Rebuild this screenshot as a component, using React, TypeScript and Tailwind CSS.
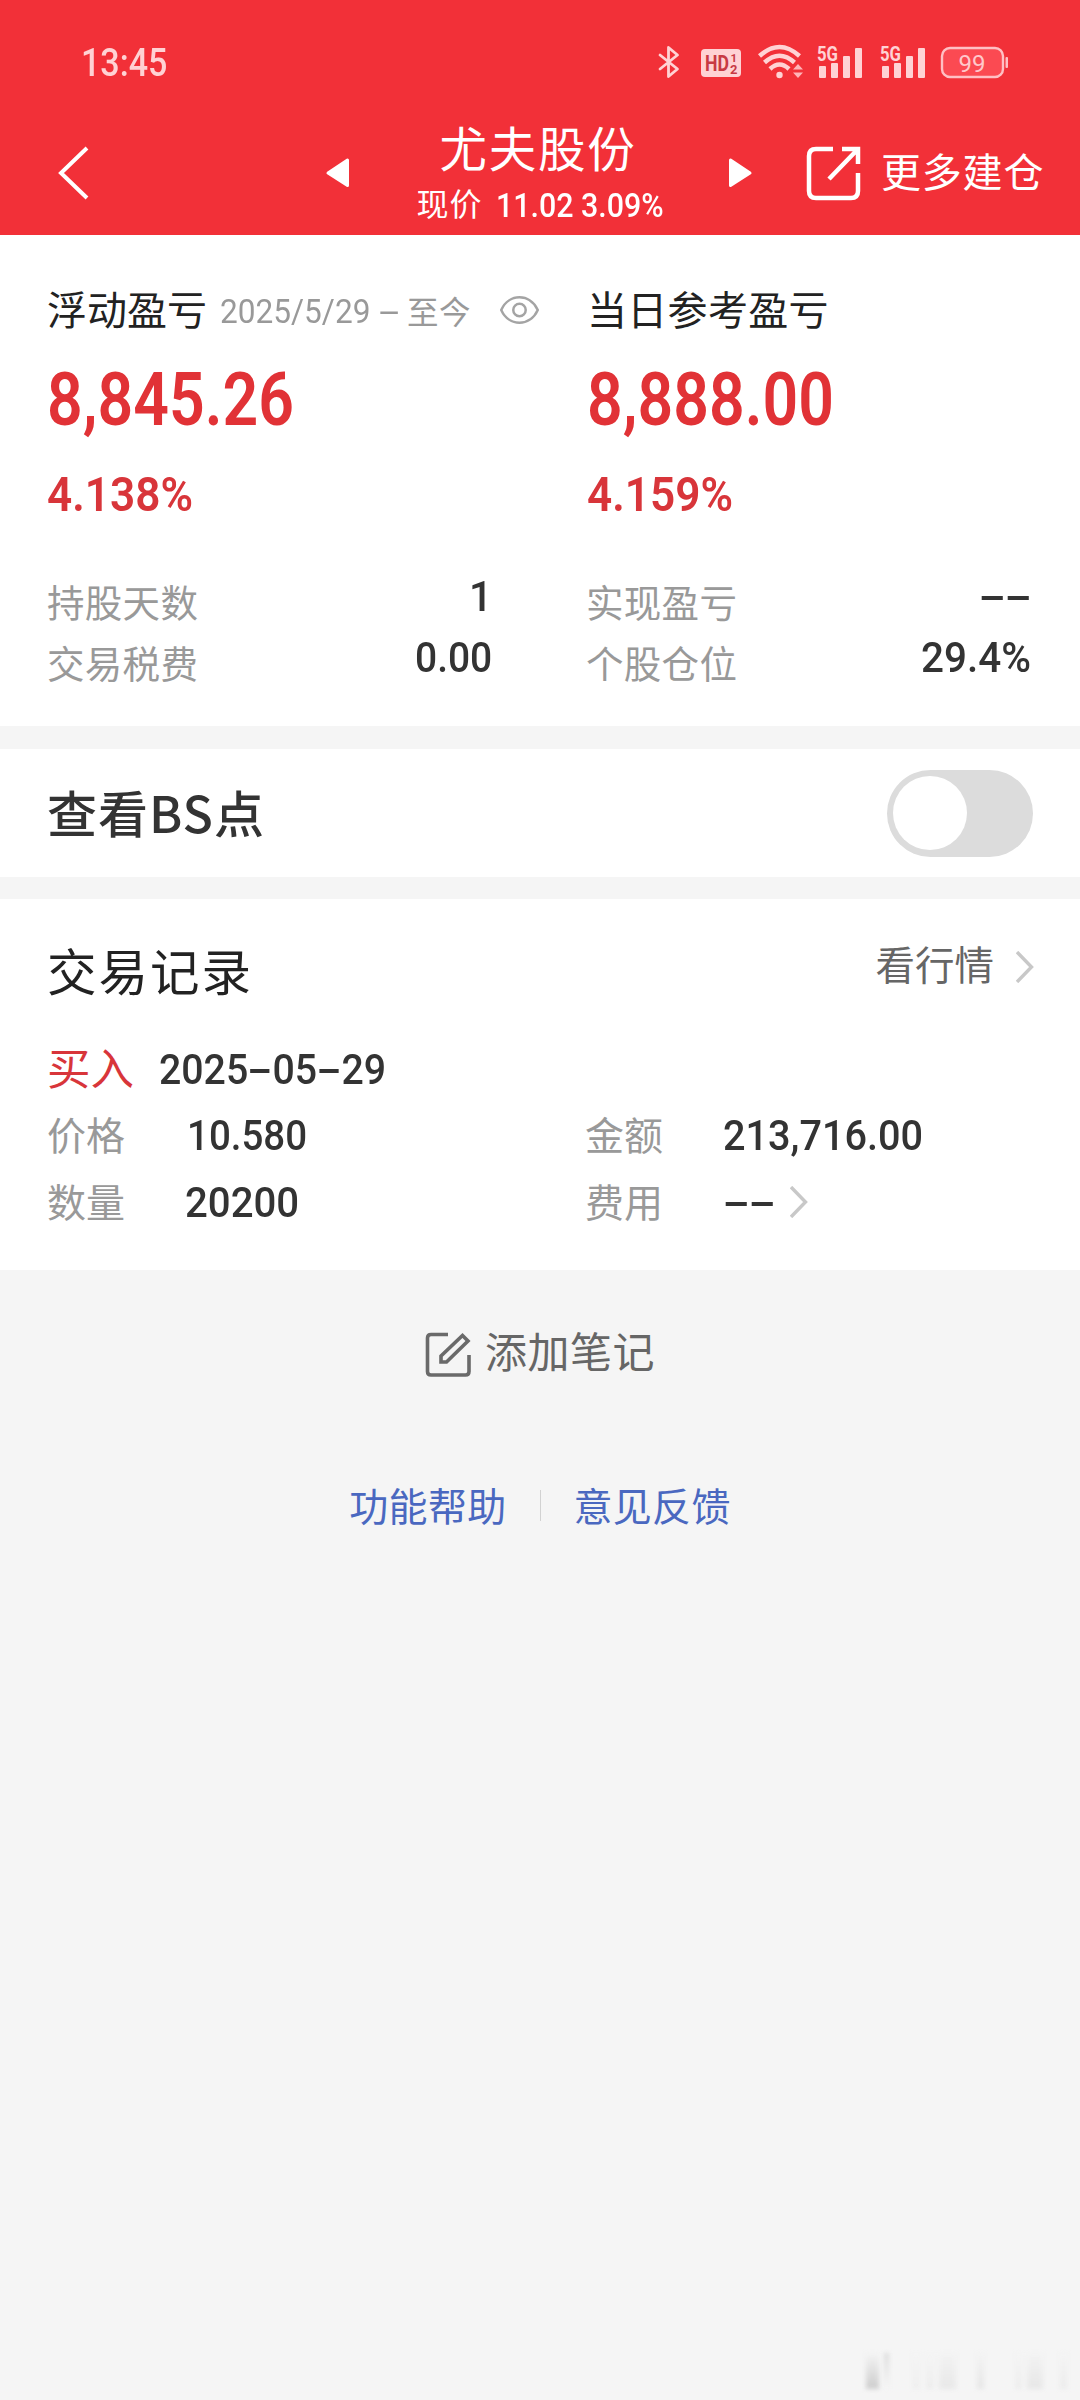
import { useLayoutEffect, useRef, useState } from "react";
import type { ReactNode } from "react";

// Squeezes a run of digits horizontally so that it fills the given width.
function Num({ w, className = "", children }: { w: number; className?: string; children: ReactNode }) {
  const ref = useRef<HTMLSpanElement>(null);
  const [k, setK] = useState(1);
  useLayoutEffect(() => {
    if (ref.current) setK(w / ref.current.offsetWidth);
  }, [w]);
  return (
    <span className={`block shrink-0 font-[Roboto,sans-serif] leading-none ${className}`} style={{ width: w }}>
      <span ref={ref} className="inline-block origin-left whitespace-nowrap" style={{ transform: `scaleX(${k})` }}>
        {children}
      </span>
    </span>
  );
}

// A wide hyphen, as long as a digit.
function Dash() {
  return (
    <span className="inline-block w-[26px] text-center">
      <span className="inline-block scale-x-[1.9]">-</span>
    </span>
  );
}

function Chevron({ className = "" }: { className?: string }) {
  return (
    <svg className={className} width="18" height="32" viewBox="0 0 18 32" fill="none" stroke="#c8c8c8" strokeWidth="3.400">
      <path d="M1 1 L15.500 16 L1 31" />
    </svg>
  );
}

function Signal() {
  return (
    <svg width="48" height="44" viewBox="0 -4 48 44" fill="#ffd2d4">
      <text x="1" y="17" fontSize="20" fontWeight="700" fontFamily="Roboto, sans-serif" textLength="21" lengthAdjust="spacingAndGlyphs">
        5G
      </text>
      <rect x="3" y="22" width="7" height="12" rx="1" />
      <rect x="15" y="19" width="7" height="15" rx="1" />
      <rect x="27" y="12" width="7" height="22" rx="1" />
      <rect x="39" y="4" width="7" height="30" rx="1" />
    </svg>
  );
}

function StatusBar() {
  return (
    <div className="flex h-[124px] items-center pl-[81px] text-[#ffd2d4]">
      <Num w={86} className="mt-px text-[38px] font-medium">13:45</Num>
      <div className="ml-[490px] flex h-[44px] items-center">
        <svg width="24" height="36" viewBox="0 0 24 36" fill="none" stroke="#ffd2d4" strokeWidth="2.8" strokeLinejoin="round" strokeLinecap="round">
          <path d="M3 11 L20.500 25 L11.500 32.500 V3.500 L20.500 11 L3 25" />
        </svg>
        <svg className="ml-[19px]" width="42" height="36" viewBox="0 0 42 36">
          <rect x="1" y="5" width="40" height="28" rx="4" fill="#ffd2d4" />
          <g fill="#c83a44" fontFamily="Roboto, sans-serif" fontWeight="700">
            <text x="5" y="27" fontSize="22" textLength="24" lengthAdjust="spacingAndGlyphs">HD</text>
            <text x="30.500" y="17.500" fontSize="11.500">1</text>
            <text x="30" y="29.500" fontSize="13">2</text>
          </g>
        </svg>
        <svg className="ml-[16px]" width="46" height="36" viewBox="0 0 46 36" fill="none" stroke="#ffd2d4" strokeWidth="4.500">
          <path d="M1.500 12 Q21.500 -6 41.500 12" />
          <path d="M6.500 18.500 Q21.500 5 36.500 18.500" />
          <path d="M12 25 Q21.500 16 31 25" />
          <circle cx="21.500" cy="31" r="3.200" fill="#ffd2d4" stroke="none" />
          <path d="M35 25.500 L40 20 L45 25.500 Z M35 28.500 L40 34 L45 28.500 Z" fill="#ffb4b8" stroke="none" />
        </svg>
        <div className="ml-[12px] flex gap-[15px]">
          <Signal />
          <Signal />
        </div>
        <svg className="ml-[13px]" width="68" height="36" viewBox="0 0 68 36">
          <rect x="2" y="4" width="61" height="29" rx="8" fill="#fb4a52" stroke="#ffc0c4" strokeWidth="2.400" />
          <rect x="65.500" y="13" width="2.500" height="11" rx="1" fill="#ffc0c4" />
          <text x="18.500" y="27.500" fontSize="24" fontFamily="Roboto, sans-serif" fill="#ffc8cb" textLength="27" lengthAdjust="spacingAndGlyphs">99</text>
        </svg>
      </div>
    </div>
  );
}

function TitleBar() {
  return (
    <div className="flex h-[111px] text-white">
      <svg className="ml-[56px] mt-[22px]" width="34" height="54" viewBox="0 0 34 54" fill="none" stroke="white" strokeWidth="4">
        <path d="M31 2 L5 27 L31 52" />
      </svg>
      <svg className="ml-[235px] mt-[33px]" width="26" height="32" viewBox="0 0 26 32" fill="white" stroke="white" strokeWidth="3" strokeLinejoin="round">
        <path d="M3 16 L22.500 3 V28.500 Z" />
      </svg>
      <div className="ml-[65px] flex w-[248px] flex-col items-center">
        <div className="-ml-[4px] -mt-px whitespace-nowrap text-[47.500px] leading-[48px] tracking-[1.8px]">尤夫股份</div>
        <div className="mt-[13px] flex h-[36px] items-center">
          <span className="text-[32px] leading-[36px] tracking-[1px]">现价</span>
          <Num w={168} className="ml-[13px] mt-[5px] text-[34px] font-medium">11.02 3.09%</Num>
        </div>
      </div>
      <svg className="ml-[63px] mt-[33px]" width="26" height="32" viewBox="0 0 26 32" fill="white" stroke="white" strokeWidth="3" strokeLinejoin="round">
        <path d="M23 16 L3.500 3 V28.500 Z" />
      </svg>
      <svg className="ml-[53px] mt-[21px]" width="56" height="56" viewBox="0 0 56 56" fill="none" stroke="white" strokeWidth="4.500">
        <path d="M27 4 H10 Q3 4 3 11 V46 Q3 53 10 53 H45 Q52 53 52 46 V28" />
        <path d="M36 4 H52 V19 M52 4 L23 34" />
      </svg>
      <span className="ml-[19px] mt-[25px] whitespace-nowrap text-[40px] leading-[42px] tracking-[0.800px]">更多建仓</span>
    </div>
  );
}

function Label({ children }: { children: ReactNode }) {
  return <span className="-ml-px -mt-[2px] whitespace-nowrap text-[37.500px] leading-[40px] tracking-[0.300px] text-[#999]">{children}</span>;
}

function Summary() {
  return (
    <section className="grid h-[491px] grid-cols-[540px_540px] bg-white">
      <div className="pl-[48px] pt-[52px]">
        <div className="flex h-[42px] items-center">
          <span className="-ml-px whitespace-nowrap text-[40px] leading-[42px] text-[#222]">浮动盈亏</span>
          <div className="ml-[13px] flex items-center pt-[3px] text-[#999]">
            <Num w={150} className="mt-[4px] text-[33.500px]">2025/5/29</Num>
            <Num w={20} className="ml-[9px] mt-[4px] text-[33px]">-</Num>
            <span className="ml-[8px] whitespace-nowrap text-[31.500px] leading-[36px] tracking-[0.500px]">至今</span>
          </div>
          <svg className="ml-[28px] mt-[3px]" width="46" height="34" viewBox="0 0 46 34" fill="none" stroke="#a4a4a4" strokeWidth="2.800">
            <path d="M2.500 17 C11 -2 35 -2 43.500 17 C35 36 11 36 2.500 17 Z" />
            <circle cx="23" cy="17" r="7" />
          </svg>
        </div>
        <Num w={247} className="-ml-px mt-[33px] text-[75px] font-semibold text-[#e13236]">8,845.26</Num>
        <Num w={146} className="-ml-px mt-[33px] text-[49px] font-semibold text-[#d8353a]">4.138%</Num>
        <div className="mt-[64px] flex h-[40px] w-[444px] justify-between">
          <Label>持股天数</Label>
          <Num w={23} className="-mt-[8px] text-[43px] font-medium text-[#333]">1</Num>
        </div>
        <div className="mt-[21px] flex h-[40px] w-[444px] justify-between">
          <Label>交易税费</Label>
          <Num w={77} className="-mt-[8px] text-[43px] font-medium text-[#333]">0.00</Num>
        </div>
      </div>
      <div className="pl-[47px] pt-[52px]">
        <div className="flex h-[42px] items-center">
          <span className="whitespace-nowrap text-[40px] leading-[42px] tracking-[0.300px] text-[#222]">当日参考盈亏</span>
        </div>
        <Num w={247} className="mt-[33px] text-[75px] font-semibold text-[#e13236]">8,888.00</Num>
        <Num w={146} className="mt-[33px] text-[49px] font-semibold text-[#d8353a]">4.159%</Num>
        <div className="mt-[64px] flex h-[40px] w-[444px] justify-between">
          <Label>实现盈亏</Label>
          <Num w={52} className="-mt-[8px] text-[43px] font-medium text-[#333]"><Dash /><Dash /></Num>
        </div>
        <div className="mt-[21px] flex h-[40px] w-[444px] justify-between">
          <Label>个股仓位</Label>
          <Num w={110} className="-mt-[8px] text-[43px] font-medium text-[#333]">29.4%</Num>
        </div>
      </div>
    </section>
  );
}

function Field({ children }: { children: ReactNode }) {
  return <span className="-ml-px mr-px whitespace-nowrap text-[39px] leading-[40px] text-[#999]">{children}</span>;
}

function Records() {
  return (
    <section className="mt-[22px] h-[371px] bg-white pl-[48px] pt-[46px]">
      <div className="flex h-[50px] w-[986px] justify-between">
        <span className="-ml-px whitespace-nowrap text-[49.500px] leading-[50px] tracking-[2px] text-[#222]">交易记录</span>
        <div className="flex">
          <span className="-mt-[2px] whitespace-nowrap text-[39.500px] leading-[40px] text-[#666]">看行情</span>
          <Chevron className="ml-[22px] mt-[6px]" />
        </div>
      </div>
      <div className="mt-[48px] flex h-[48px] items-center">
        <span className="-ml-px whitespace-nowrap text-[43.500px] leading-[48px] text-[#d8353a]">买入</span>
        <Num w={227} className="ml-[25px] mt-[5px] text-[42px] font-medium text-[#333]">2025<Dash />05<Dash />29</Num>
      </div>
      <div className="mt-[22px] grid grid-cols-[538px_auto]">
        <div className="flex h-[40px]">
          <div className="w-[139px]"><Field>价格</Field></div>
          <Num w={120} className="mt-px text-[43px] font-medium text-[#333]">10.580</Num>
        </div>
        <div className="flex h-[40px]">
          <div className="w-[137px]"><Field>金额</Field></div>
          <Num w={200} className="mt-px text-[43px] font-medium text-[#333]">213,716.00</Num>
        </div>
      </div>
      <div className="mt-[27px] grid grid-cols-[538px_auto]">
        <div className="flex h-[40px]">
          <div className="w-[137px]"><Field>数量</Field></div>
          <Num w={114} className="mt-px text-[43px] font-medium text-[#333]">20200</Num>
        </div>
        <div className="flex h-[40px]">
          <div className="w-[137px]"><Field>费用</Field></div>
          <Num w={52} className="mt-px text-[43px] font-medium text-[#333]"><Dash /><Dash /></Num>
          <Chevron className="ml-[15px] mt-[6px]" />
        </div>
      </div>
    </section>
  );
}

export default function App() {
  return (
    <div className="flex h-[2400px] w-[1080px] flex-col overflow-hidden bg-[#f5f5f5] font-['Noto_Sans_CJK_SC',sans-serif]">
      <header className="h-[235px] shrink-0 bg-[#f23038]">
        <StatusBar />
        <TitleBar />
      </header>
      <Summary />
      <section className="mt-[23px] flex h-[128px] items-center justify-between bg-white pl-[47px] pr-[47px]">
        <span className="-mt-[5px] whitespace-nowrap text-[50px] font-medium leading-[52px] tracking-[1px] text-[#333]">查看BS点</span>
        <div className="flex h-[87px] w-[146px] items-center rounded-full bg-[#dcdcdc] pl-[6px]">
          <div className="size-[74px] rounded-full bg-white" />
        </div>
      </section>
      <Records />
      <div className="mt-[60px] flex h-[44px] justify-center text-[#666]">
        <svg className="mt-[2px]" width="46" height="46" viewBox="0 0 46 46" fill="none" stroke="#6a6a6a" strokeWidth="3.600">
          <path d="M23 2.500 H6 Q2.500 2.500 2.500 6 V39.500 Q2.500 43 6 43 H40.500 Q44 43 44 39.500 V23" />
          <path d="M16 30 V24 L37.500 3.500 L43 9 L21.500 30 Z" />
        </svg>
        <span className="ml-[14px] whitespace-nowrap text-[42px] leading-[40px] tracking-[0.500px]">添加笔记</span>
      </div>
      <div className="mt-[110px] flex h-[42px] items-center justify-center text-[39px] leading-[42px] text-[#4a68c0]">
        <span className="-mt-[2px] tracking-[0.300px]">功能帮助</span>
        <span className="mx-[33px] mt-px h-[31px] w-px bg-[#d2d2d2]" />
        <span className="-mt-[2px] tracking-[0.300px]">意见反馈</span>
      </div>
      <div className="ml-auto mr-[6px] mt-auto mb-[11px] flex h-[36px] w-[208px] shrink-0 items-stretch blur-[2px]">
        <div className="w-[13px] bg-linear-to-b from-[#f4f4f4] to-[#cdcdcd]" />
        <div className="ml-[5px] w-[5px] bg-linear-to-b from-[#dcdcdc] to-[#f5f5f5]" />
        <div className="ml-[24px] w-[6px] bg-linear-to-b from-[#f4f4f4] to-[#ededed]" />
        <div className="ml-[8px] w-[6px] bg-linear-to-b from-[#f4f4f4] to-[#ebebeb]" />
        <div className="ml-[6px] w-[17px] bg-linear-to-b from-[#f3f3f3] to-[#e8e8e8]" />
        <div className="ml-[21px] w-[7px] bg-linear-to-b from-[#f3f3f3] to-[#e6e6e6]" />
        <div className="ml-[32px] w-[5px] bg-linear-to-b from-[#f4f4f4] to-[#ebebeb]" />
        <div className="ml-[6px] w-[16px] bg-linear-to-b from-[#f3f3f3] to-[#e7e7e7]" />
        <div className="ml-[17px] w-[7px] bg-linear-to-b from-[#f4f4f4] to-[#ebebeb]" />
      </div>
    </div>
  );
}
